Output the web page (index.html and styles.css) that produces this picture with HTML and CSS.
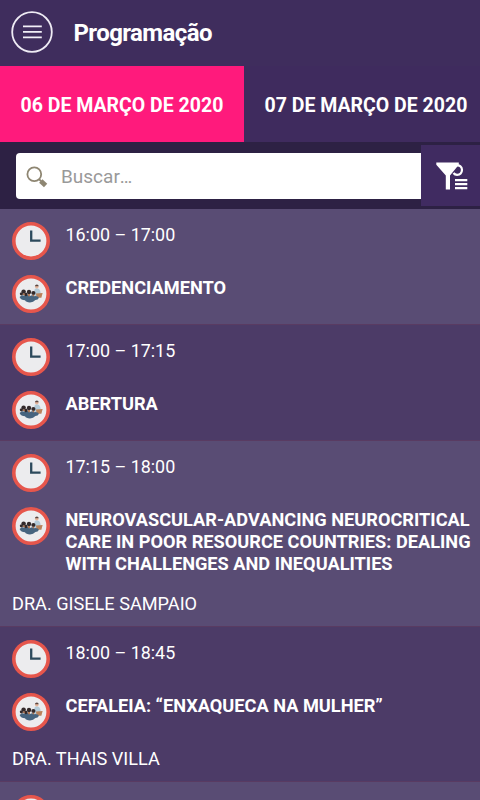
FILE: index.html
```html
<!DOCTYPE html>
<html lang="pt-BR">
<head>
<meta charset="utf-8">
<title>Programação</title>
<link rel="stylesheet" href="styles.css">
</head>
<body>
<svg class="defs" width="0" height="0">
  <symbol id="clock" viewBox="0 0 38 38">
    <circle cx="19" cy="19" r="17.2" fill="#ececee" stroke="#e6564c" stroke-width="3.6"/>
    <path d="M19.2 8.5V18.7H28.6" fill="none" stroke="#2c4a5c" stroke-width="2.3"/>
  </symbol>
  <symbol id="people" viewBox="0 0 38 38">
    <circle cx="19" cy="19" r="17.2" fill="#ececee" stroke="#e6564c" stroke-width="3.6"/>
    <path d="M22.2 17q0-3.6 2.3-3.8 3.4 0 4 3.8l.5 4h-6.6z" fill="#b3cbd9"/>
    <circle cx="24.8" cy="11.8" r="1.8" fill="#e5b49a"/>
    <path d="M22.9 11.2q.2-1.8 2-1.8t1.7 1.9z" fill="#5b4640"/>
    <path d="M24 18.4l6.6-.4-1.2 4.8h-4.8z" fill="#b9825b"/>
    <path d="M7.6 22q2.6-2.8 5-1 3-2 5 .2 3-2 5 0 3-.6 4.4 1.6-1 2.2-3.6 2.2-2 2.4-5.4 2.4-4 0-5-2.1-4 0-5.4-3.3z" fill="#46647f"/>
    <g fill="#332a2b"><circle cx="11.6" cy="16.6" r="2.2"/><circle cx="17" cy="17" r="2.2"/><circle cx="21.4" cy="18" r="2.1"/><circle cx="9.4" cy="18.8" r="1.6"/><circle cx="13.8" cy="19.4" r="1.8"/></g>
    <path d="M11 18.4h1.8v1.6H11zM16.1 19h1.8v2.2h-1.8zM20.6 19.8h1.6v1.4h-1.6z" fill="#b0744f"/>
  </symbol>
</svg>
<div class="app">
  <header class="topbar">
    <svg class="menu" viewBox="0 0 42 42"><circle cx="21" cy="21" r="19.8" fill="none" stroke="#eeebf4" stroke-width="1.8"/><path d="M12 15.4h18.8M12 20.9h18.8M12 26.4h18.8" stroke="#f2eff7" stroke-width="1.7"/></svg>
    <h1>Programação</h1>
  </header>
  <nav class="tabs">
    <div class="tab active"><span>06 DE MARÇO DE 2020</span></div>
    <div class="tab"><span>07 DE MARÇO DE 2020</span></div>
  </nav>
  <div class="searchbar">
    <div class="field">
      <svg class="loupe" viewBox="0 0 22 22"><circle cx="8.3" cy="8.3" r="6.9" fill="none" stroke="#8e8672" stroke-width="1.8"/><path d="M12.8 13l2.5 2.4" stroke="#8e8672" stroke-width="1.8"/><path d="M14.8 15l4.8 4.6" stroke="#8e8672" stroke-width="4.8"/></svg>
      <span>Buscar<span class="dots">...</span></span>
    </div>
    <div class="filter">
      <svg viewBox="0 0 32 28"><path d="M.3.5h22.5v2.3L14 13.5v14H9.8v-14L.3 2.8z" fill="#fff"/><path d="M20.5 3.5q5.2-.6 5.5 4.3-.2 5-4.9 5-2.3 0-3.6-1.8" fill="none" stroke="#fff" stroke-width="2.2"/><path d="M19 18.2h12.3M19 22.2h12.3M19 26.2h12.3" stroke="#fff" stroke-width="2.2"/></svg>
    </div>
  </div>
  <main class="list">
    <section class="item">
      <div class="line"><svg class="icon"><use href="#clock"/></svg><p class="time">16:00 – 17:00</p></div>
      <div class="line"><svg class="icon"><use href="#people"/></svg><h2>CREDENCIAMENTO</h2></div>
    </section>
    <section class="item">
      <div class="line"><svg class="icon"><use href="#clock"/></svg><p class="time">17:00 – 17:15</p></div>
      <div class="line"><svg class="icon"><use href="#people"/></svg><h2>ABERTURA</h2></div>
    </section>
    <section class="item">
      <div class="line"><svg class="icon"><use href="#clock"/></svg><p class="time">17:15 – 18:00</p></div>
      <div class="line"><svg class="icon"><use href="#people"/></svg><h2>NEUROVASCULAR-ADVANCING NEUROCRITICAL<br>CARE IN POOR RESOURCE COUNTRIES: DEALING<br>WITH CHALLENGES AND INEQUALITIES</h2></div>
      <p class="speaker">DRA. GISELE SAMPAIO</p>
    </section>
    <section class="item">
      <div class="line"><svg class="icon"><use href="#clock"/></svg><p class="time">18:00 – 18:45</p></div>
      <div class="line"><svg class="icon"><use href="#people"/></svg><h2>CEFALEIA: “ENXAQUECA NA MULHER”</h2></div>
      <p class="speaker">DRA. THAIS VILLA</p>
    </section>
    <section class="item">
      <div class="line"><svg class="icon"><use href="#clock"/></svg></div>
    </section>
  </main>
</div>
</body>
</html>
```

FILE: styles.css
```css
* { box-sizing: border-box; }
body { margin: 0; font-family: Roboto, "Liberation Sans", sans-serif; color: #fff; background: #2d2144; }
.defs { display: block; }
h1, h2, p { margin: 0; }
.app { height: 800px; overflow: hidden; display: flex; flex-direction: column; }
.topbar { flex: none; height: 66px; background: #3f2d5d; display: flex; align-items: center; padding: 0 11px 2px; gap: 20.5px; }
.menu { width: 42px; height: 42px; }
h1 { font-size: 24px; line-height: 30px; font-weight: 700; letter-spacing: -0.6px; padding-top: 2px; }
.tabs { flex: none; height: 76px; display: grid; grid-template-columns: 244px 236px; background: #3f2b5e; }
.tab { display: flex; align-items: center; padding: 2px 0 0 20.5px; font-size: 19.5px; font-weight: 700; white-space: nowrap; }
.active { background: #ff1a7c; }
.searchbar { flex: none; height: 67px; display: flex; align-items: flex-start; padding: 3px 0 0 16px; background: #2d2144; }
.field { width: 405px; height: 46px; margin-top: 8px; background: #fff; border-radius: 4px 0 0 4px; display: flex; align-items: center; padding: 1px 0 0 10px; gap: 13px; color: #999; font-size: 19px; }
.dots { letter-spacing: -1.2px; }
.loupe { width: 22px; height: 22px; }
.filter { flex: 1; height: 61px; background: #402b61; padding: 17px 0 0 15px; }
.filter svg { display: block; width: 32px; height: 28px; }
.list { flex: 1; min-height: 0; }
.item { min-height: 116px; padding: 13px 0 11px 12px; background: #4c3b67; border-bottom: 1px solid #593b62; }
.item:nth-child(odd) { background: #594c74; }
.line { display: flex; align-items: flex-start; gap: 15.5px; }
.line + .line { margin-top: 15px; }
.icon { flex: none; width: 38px; height: 38px; }
.line + .line .icon { margin-bottom: -2px; }
.time { font-size: 17.9px; line-height: 22px; padding-top: 2px; }
h2 { font-size: 18.2px; line-height: 21.7px; font-weight: 700; white-space: nowrap; padding-top: 2.4px; }
.speaker { font-size: 18.15px; line-height: 22px; margin: 18.6px 0 0; }
```
